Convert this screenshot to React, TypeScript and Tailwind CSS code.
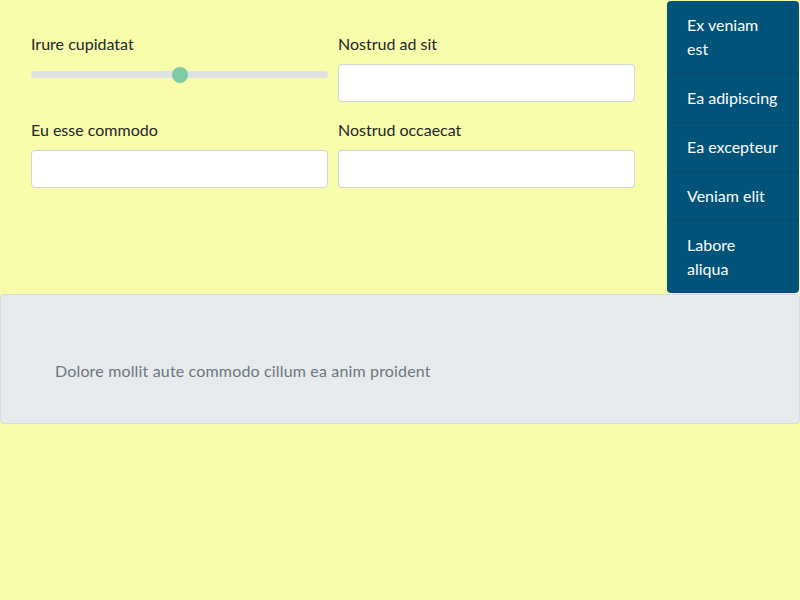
import React from 'react';

const menu = ['Ex veniam est', 'Ea adipiscing', 'Ea excepteur', 'Veniam elit', 'Labore aliqua'];

function Field({ label }: { label: string }) {
  return (
    <div className="flex flex-col">
      <label className="mb-2 leading-6 text-[#212529]">{label}</label>
      <input className="h-[38px] w-full rounded-[4px] border border-[#ced4da] bg-white px-3 outline-none" />
    </div>
  );
}

export default function App() {
  return (
    <div
      className="min-h-[600px] bg-[#f8fdab] text-base"
      style={{ fontFamily: 'Lato, "Noto Sans", sans-serif' }}
    >
      {/* Top: form + side menu */}
      <div className="flex h-[294px] items-start">
        <div className="grid flex-1 grid-cols-2 gap-x-[10px] gap-y-4 pl-[31px] pr-[32px] pt-8">
          <div className="flex flex-col">
            <label className="mb-2 leading-6 text-[#212529]">Irure cupidatat</label>
            <div className="relative flex h-[38px] items-start">
              <div className="mt-[7px] h-[7px] w-full rounded-full bg-[#dee2e6]" />
              <div className="absolute left-[141px] top-[3px] h-4 w-4 rounded-full bg-[#7fcba5]" />
            </div>
          </div>
          <Field label="Nostrud ad sit" />
          <Field label="Eu esse commodo" />
          <Field label="Nostrud occaecat" />
        </div>
        <nav className="mt-px mr-px w-[132px] overflow-hidden rounded-[4px] bg-[#02537a]">
          {menu.map((m, i) => (
            <div
              key={m}
              className={`px-5 py-3 leading-6 text-white ${i < menu.length - 1 ? 'border-b border-[#0a4766]' : ''}`}
            >
              {m}
            </div>
          ))}
        </nav>
      </div>

      {/* Bottom panel */}
      <div className="rounded-[4px] border border-[#d6dbe0] bg-[#e8ebee] px-[54px] pb-[40px] pt-[64px]">
        <p className="leading-6 tracking-[0.16px] text-[#6c757d]">
          Dolore mollit aute commodo cillum ea anim proident
        </p>
      </div>
    </div>
  );
}
